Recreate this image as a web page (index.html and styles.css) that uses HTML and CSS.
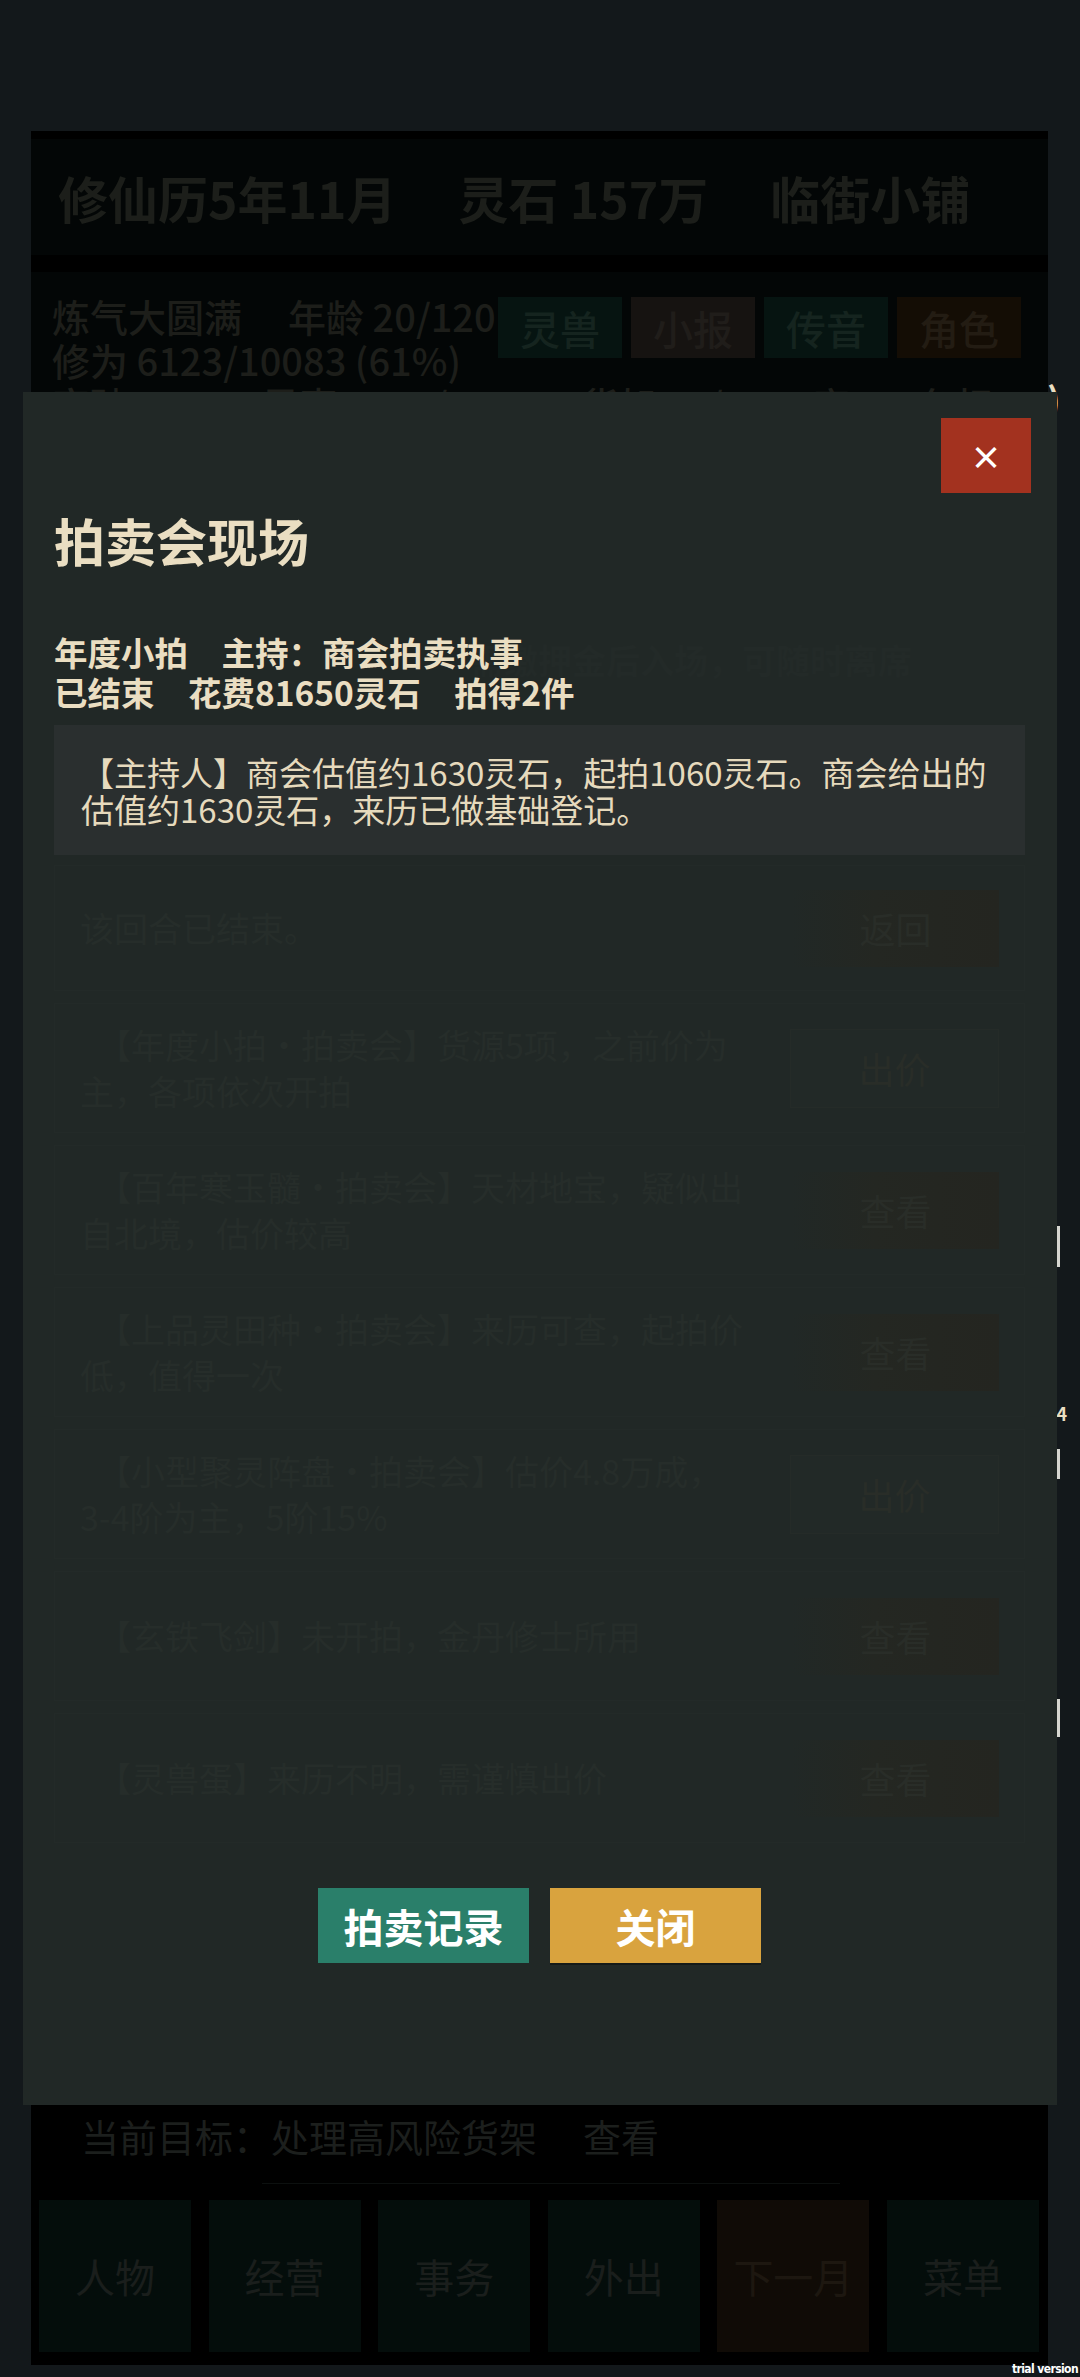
FILE: index.html
```html
<!DOCTYPE html>
<html lang="zh-CN">
<head>
    <meta charset="UTF-8">
    <meta name="viewport" content="width=device-width, initial-scale=1.0">
    <title>拍卖会现场</title>
    <link rel="stylesheet" href="styles.css">
</head>
<body>
    <div class="screen">
        <div class="game">
            <header class="top-bar">
                <span>修仙历5年11月</span>
                <span>灵石 157万</span>
                <span>临街小铺</span>
            </header>

            <section class="status">
                <div>炼气大圆满<span class="gap">年龄 20/120</span></div>
                <div>修为 6123/10083 (61%)</div>
                <div>突破 88%<span class="gap">风声 2756/9759</span><span class="gap">货架 14/25</span><span class="gap">宠8</span><span class="gap">负担 9</span></div>
                <div class="quick">
                    <span class="q-teal">灵兽</span>
                    <span class="q-grey">小报</span>
                    <span class="q-teal">传音</span>
                    <span class="q-brown">角色</span>
                </div>
            </section>

            <div class="footer">
                <div class="goal">当前目标：处理高风险货架<span class="goal-link">查看</span></div>
                <div class="divider"></div>
                <nav class="nav">
                    <span>人物</span>
                    <span>经营</span>
                    <span>事务</span>
                    <span>外出</span>
                    <span class="next">下一月</span>
                    <span>菜单</span>
                </nav>
            </div>
        </div>

        <!-- 面板右侧溢出的内容 -->
        <span class="peek peek-paren">)</span>
        <span class="peek peek-line" style="top: 1226px; height: 41px;"></span>
        <span class="peek peek-num">34</span>
        <span class="peek peek-line" style="top: 1449px; height: 30px;"></span>
        <span class="peek peek-line" style="top: 1699px; height: 38px;"></span>

        <div class="modal">
            <div class="modal-head">
                <span class="close">×</span>
            </div>
            <h1 class="modal-title">拍卖会现场</h1>
            <span class="ghost">需缴押金后入场，可随时离席</span>
            <div class="meta">
                <div>年度小拍　主持：商会拍卖执事</div>
                <div>已结束　花费81650灵石　拍得2件</div>
            </div>
            <div class="host">【主持人】商会估值约1630灵石，起拍1060灵石。商会给出的估值约1630灵石，来历已做基础登记。</div>

            <div class="lots">
                <div class="lot lot-first">
                    <div class="lot-text">该回合已结束。</div>
                    <span class="lot-btn warm">返回</span>
                </div>
                <div class="lot">
                    <div class="lot-text">　【年度小拍·拍卖会】货源5项，之前价为主，各项依次开拍</div>
                    <span class="lot-btn boxed">出价</span>
                </div>
                <div class="lot">
                    <div class="lot-text">　【百年寒玉髓·拍卖会】天材地宝，疑似出自北境，估价较高</div>
                    <span class="lot-btn warm">查看</span>
                </div>
                <div class="lot">
                    <div class="lot-text">　【上品灵田种·拍卖会】来历可查，起拍价低，值得一次</div>
                    <span class="lot-btn warm">查看</span>
                </div>
                <div class="lot">
                    <div class="lot-text">　【小型聚灵阵盘·拍卖会】估价4.8万成，3-4阶为主，5阶15%</div>
                    <span class="lot-btn boxed">出价</span>
                </div>
                <div class="lot">
                    <div class="lot-text">　【玄铁飞剑】未开拍，金丹修士所用</div>
                    <span class="lot-btn warm">查看</span>
                </div>
                <div class="lot">
                    <div class="lot-text">　【灵兽蛋】来历不明，需谨慎出价</div>
                    <span class="lot-btn warm">查看</span>
                </div>
            </div>

            <div class="actions">
                <span class="btn btn-green">拍卖记录</span>
                <span class="btn btn-gold">关闭</span>
            </div>
        </div>

        <span class="watermark">trial version</span>
    </div>
</body>
</html>
```

FILE: styles.css
```css
/* 基础 */
body {
    margin: 0;
    background-color: #13181b;
    font-family: "Noto Sans CJK SC", "Noto Sans", sans-serif;
}

.screen {
    position: relative;
    width: 1080px;
    height: 2377px;
    padding-top: 131px;
    box-sizing: border-box;
    overflow: hidden;
}

/* 底层游戏界面（被遮罩压暗） */
.game {
    margin-left: 31px;
    width: 1017px;
    height: 2234px;
    background: #000;
    display: flex;
    flex-direction: column;
}

.top-bar {
    margin-top: 8px;
    height: 116px;
    background: #030606;
    display: flex;
    align-items: center;
    gap: 62px;
    padding-left: 27px;
    font-size: 50px;
    font-weight: bold;
    color: #1c1e1a;
    white-space: nowrap;
}

.status {
    position: relative;
    margin-top: 17px;
    height: 300px;
    background: #030606;
    padding: 22px 0 0 21px;
    font-size: 38px;
    line-height: 44px;
    font-weight: 500;
    color: #1d1e1a;
    white-space: nowrap;
}

.status .gap {
    margin-left: 46px;
}

.quick {
    position: absolute;
    top: 25px;
    right: 27px;
    display: flex;
    gap: 9px;
}

.quick span {
    width: 124px;
    height: 61px;
    display: flex;
    align-items: center;
    justify-content: center;
    font-size: 40px;
}

.q-teal {
    background: #061411;
    color: #15241f;
}

.q-grey {
    background: #161311;
    color: #201d1a;
}

.q-brown {
    background: #140d05;
    color: #231c13;
}

.footer {
    margin-top: auto;
    padding: 0 9px 13px 8px;
}

.goal {
    height: 71px;
    line-height: 71px;
    padding-left: 42px;
    font-size: 38px;
    color: #1c1f1d;
}

.goal-link {
    margin-left: 46px;
}

.divider {
    width: 578px;
    height: 1px;
    background: #0c100f;
    margin: 12px 0 16px 223px;
}

.nav {
    display: flex;
    gap: 17.6px;
    height: 152px;
}

.nav span {
    flex: 1;
    background: #040d0b;
    display: flex;
    align-items: center;
    justify-content: center;
    font-size: 40px;
    color: #1a1e1c;
}

.nav .next {
    background: #100b06;
    color: #1d1710;
}

/* 溢出到面板外的亮色残片 */
.peek {
    position: absolute;
    z-index: 1;
}

.peek-paren {
    left: 1047px;
    top: 372px;
    font-size: 36px;
    font-weight: bold;
    color: #eadec2;
}

.peek-line {
    left: 1057px;
    width: 3px;
    background: #d6d6d0;
}

.peek-num {
    left: 1046px;
    top: 1400px;
    font-size: 18px;
    font-weight: bold;
    color: #eadec2;
}

/* 弹窗 */
.modal {
    position: absolute;
    z-index: 2;
    left: 23px;
    top: 392px;
    width: 1034px;
    height: 1713px;
    box-sizing: border-box;
    padding: 26px 32px 0 31px;
    background: #212826;
    color: #eadec2;
}

.modal-head {
    display: flex;
    justify-content: flex-end;
    margin-right: -6px;
}

.close {
    width: 90px;
    height: 75px;
    background: #a3321f;
    color: #fff;
    font-size: 32px;
    font-weight: bold;
    display: flex;
    align-items: center;
    justify-content: center;
}

.modal-title {
    margin: 17px 0 0;
    font-size: 51px;
    line-height: 60px;
    font-weight: bold;
}

.ghost {
    position: absolute;
    left: 447px;
    top: 243px;
    font-size: 34px;
    font-weight: bold;
    color: #232a28;
}

.meta {
    position: relative;
    margin-top: 62px;
    font-size: 33.5px;
    line-height: 40px;
    font-weight: bold;
}

.host {
    margin-top: 13px;
    background: #2a2f2f;
    padding: 29px 26px 27px 27px;
    font-size: 33px;
    line-height: 37px;
    color: #e6dabd;
}

.lots {
    margin-top: 10px;
    display: flex;
    flex-direction: column;
    gap: 12px;
}

.lot {
    height: 130px;
    box-sizing: border-box;
    border: 1px solid #232a28;
    background: #212826;
    display: flex;
    align-items: center;
    padding: 0 25px;
    gap: 40px;
}

.lot-first {
    height: 126px;
}

.lot-text {
    flex: 1;
    font-size: 34px;
    line-height: 46px;
    color: #262d2a;
}

.lot-btn {
    width: 207px;
    height: 77px;
    display: flex;
    align-items: center;
    justify-content: center;
    font-size: 36px;
    color: #292d28;
}

.lot-btn.warm {
    background: linear-gradient(90deg, #212826, #242722 40%, #242520);
}

.lot-btn.boxed {
    border: 1px solid #252b28;
    background: #222927;
}

.actions {
    margin-top: 45px;
    display: flex;
    justify-content: center;
    gap: 21px;
}

.btn {
    width: 211px;
    height: 75px;
    display: flex;
    align-items: center;
    justify-content: center;
    font-size: 40px;
    font-weight: bold;
    color: #fff;
}

.btn-green {
    background: #2a7f6a;
}

.btn-gold {
    background: #d9a33e;
    box-shadow: 0 2px 0 rgba(0, 0, 0, 0.35);
}

.watermark {
    position: absolute;
    right: 2px;
    bottom: 1px;
    font-family: "DejaVu Sans Condensed", "Liberation Sans", sans-serif;
    font-stretch: condensed;
    font-size: 12px;
    letter-spacing: -0.6px;
    font-weight: bold;
    color: #fff;
}
```
